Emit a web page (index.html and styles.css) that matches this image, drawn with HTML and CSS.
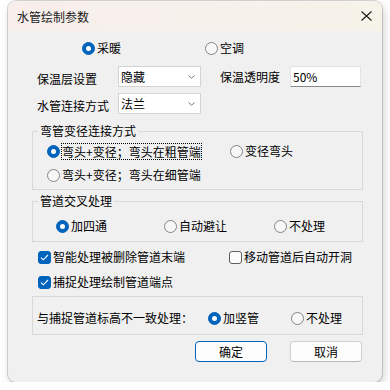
FILE: index.html
```html
<!DOCTYPE html>
<html lang="zh-CN">
<head>
<meta charset="utf-8">
<title>水管绘制参数</title>
<link rel="stylesheet" href="styles.css">
</head>
<body>
<div class="window">
  <div class="titlebar">
    <span class="title">水管绘制参数</span>
    <svg class="close" width="11" height="10" viewBox="0 0 11 10"><path d="M0.5 0.5L10.5 9.5M10.5 0.5L0.5 9.5" stroke="#1a1a1a" stroke-width="1.1" fill="none"/></svg>
  </div>
  <div class="content">
    <div class="row row-type">
      <label class="opt w-cainuan"><span class="radio checked"></span>采暖</label>
      <label class="opt"><span class="radio"></span>空调</label>
    </div>

    <div class="row row-form">
      <span class="lbl">保温层设置</span>
      <div class="combo"><span>隐藏</span><svg class="chev" width="7" height="4" viewBox="0 0 7 4"><path d="M0.5 0.5L3.5 3.3L6.5 0.5" stroke="#666" stroke-width="0.9" fill="none"/></svg></div>
      <span class="lbl2">保温透明度</span>
      <div class="textbox">50%</div>
    </div>

    <div class="row row-form row-form2">
      <span class="lbl">水管连接方式</span>
      <div class="combo"><span>法兰</span><svg class="chev" width="7" height="4" viewBox="0 0 7 4"><path d="M0.5 0.5L3.5 3.3L6.5 0.5" stroke="#666" stroke-width="0.9" fill="none"/></svg></div>
    </div>

    <fieldset class="group g1">
      <legend>弯管变径连接方式</legend>
      <div class="row grow">
        <label class="opt w-cu"><span class="radio checked"></span><span class="focus">弯头+变径；弯头在粗管端</span></label>
        <label class="opt"><span class="radio"></span>变径弯头</label>
      </div>
      <div class="row grow grow2">
        <label class="opt"><span class="radio"></span>弯头+变径；弯头在细管端</label>
      </div>
    </fieldset>

    <fieldset class="group g2">
      <legend>管道交叉处理</legend>
      <div class="row grow">
        <label class="opt w-sitong"><span class="radio checked"></span>加四通</label>
        <label class="opt w-birang"><span class="radio"></span>自动避让</label>
        <label class="opt"><span class="radio"></span>不处理</label>
      </div>
    </fieldset>

    <div class="row checks">
      <label class="opt w-zhineng"><span class="check checked"><svg width="9" height="7" viewBox="0 0 9 7"><path d="M1 3.6L3.3 5.8L8 1" stroke="#fff" stroke-width="1.1" fill="none"/></svg></span>智能处理被删除管道末端</label>
      <label class="opt"><span class="check"></span>移动管道后自动开洞</label>
    </div>
    <div class="row checks checks2">
      <label class="opt"><span class="check checked"><svg width="9" height="7" viewBox="0 0 9 7"><path d="M1 3.6L3.3 5.8L8 1" stroke="#fff" stroke-width="1.1" fill="none"/></svg></span>捕捉处理绘制管道端点</label>
    </div>

    <div class="group g3">
      <div class="row">
        <span class="lbl3">与捕捉管道标高不一致处理：</span>
        <label class="opt w-shuguan"><span class="radio checked"></span>加竖管</label>
        <label class="opt"><span class="radio"></span>不处理</label>
      </div>
    </div>

    <div class="row buttons">
      <button class="btn default">确定</button>
      <button class="btn">取消</button>
    </div>
  </div>
</div>
</body>
</html>
```
FILE: styles.css
```css
* { box-sizing: border-box; }
html, body { margin: 0; padding: 0; }
body {
  background: #ffffff;
  font-family: "Noto Sans CJK SC", "Noto Sans", sans-serif;
  font-size: 12px;
  color: #000;
}
.window {
  margin: 1px 0 0 8px;
  width: 374px;
  height: 381px;
  border-radius: 8px;
  background: #f0f0f0;
  overflow: hidden;
  box-shadow: 0 0 0 1px rgba(0,0,0,0.16), 2px 4px 10px rgba(0,0,0,0.18);
}
.titlebar {
  height: 30px;
  display: flex;
  align-items: center;
  justify-content: space-between;
  padding: 1px 10px 0 9px;
  background: linear-gradient(90deg, #f8eeec 0%, #f7f1ec 50%, #f6f3e9 100%);
}
.title { font-size: 12px; line-height: 14px; color: #1a1a1a; }
.close { display: block; margin-top: -2px; }
.content { display: flex; flex-direction: column; }
.row { display: flex; align-items: center; height: 20px; line-height: 20px; white-space: nowrap; }
.opt { display: inline-flex; align-items: center; height: 20px; }
.radio {
  width: 13px; height: 13px; border-radius: 50%;
  border: 1px solid #858585; background: #f7f7f7;
  margin-right: 2px; flex: none;
}
.radio.checked { background: #0064bd; border-color: #0064bd; }
.radio.checked::after {
  content: ""; display: block; width: 5px; height: 5px; margin: 3px;
  border-radius: 50%; background: #fff;
}
.check {
  width: 13px; height: 13px; border-radius: 3px;
  border: 1px solid #5f5f5f; background: #fbfbfb;
  margin-right: 2px; flex: none;
  display: flex; align-items: center; justify-content: center;
}
.check.checked { background: #0064bd; border-color: #0064bd; }
.check svg { display: block; }

.row-type { margin-top: 7px; padding-left: 74px; }
.w-cainuan { width: 123px; }

.row-form { margin-top: 8px; height: 21px; padding-left: 29px; align-items: flex-start; }
.row-form2 { margin-top: 6px; }
.lbl { width: 81px; line-height: 21px; padding-top: 2px; }
.combo {
  width: 83px; height: 21px; background: #fff;
  border: 1px solid #d3d3d3;
  display: flex; align-items: center; justify-content: space-between;
  padding: 0 5px 0 2px; line-height: 19px;
}
.chev { display: block; }
.lbl2 { width: 89px; padding-left: 19px; line-height: 21px; }
.textbox {
  width: 71px; height: 21px; background: #fff;
  border: 1px solid #e3e3e3; border-bottom-color: #8a8a8a;
  padding-left: 2px; line-height: 19px;
}

.group {
  margin: 0 0 0 24px;
  width: 331px;
  border: 1px solid #d8d8d8;
  padding: 0;
  min-width: 0;
}
.group legend {
  padding: 0 2px;
  margin-left: 5px;
  line-height: 14px;
  height: 14px;
}
.g1 { margin-top: 10px; padding-top: 3px; padding-bottom: 4px; }
.g1 .row { padding-left: 14px; }
.grow2 { margin-top: 4px; }
.w-cu { width: 183px; }
.focus { border: 1px dotted #000; line-height: 15px; height: 17px; padding: 0; margin-left: -1px; }

.g2 { margin-top: 4px; padding-top: 8px; padding-bottom: 5px; }
.g2 .row { padding-left: 23px; }
.w-sitong { width: 108px; }
.w-birang { width: 110px; }

.checks { margin-top: 5px; padding-left: 30px; }
.w-zhineng { width: 191px; }

.g3 { margin-top: 4px; padding: 11px 0 6px 4px; }
.lbl3 { width: 171px; }
.w-shuguan { width: 83px; }

.buttons { margin-top: 6px; height: 21px; padding-left: 187px; gap: 23px; }
.btn {
  width: 72px; height: 21px; padding: 0;
  font-family: inherit; font-size: 12px; line-height: 19px; color: #000;
  background: #fdfdfd; border: 1px solid #d0d0d0; border-bottom-color: #b8b8b8;
  border-radius: 4px;
}
.btn.default { border: 1px solid #0064bd; }
```
